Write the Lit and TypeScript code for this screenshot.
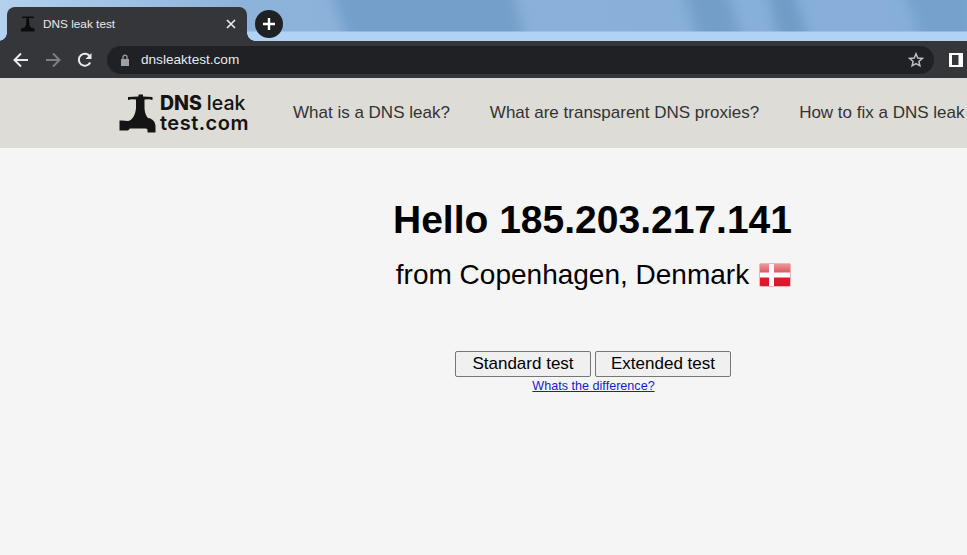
import { LitElement, html, css, svg } from "lit";
import { customElement } from "lit/decorators.js";

const tap = svg`<path fill="#141414" d="M128 95 L138.500 94.500 V92.500 H143 V94.500 L152.500 95 V98 L149 97.300 L144.500 97.500 V106 C144.500 110 146 114 148 116 C151 116.500 155 118 155.500 124 V130.500 H147.500 V127.500 L146 126.500 H130 L128 128.500 H119.500 V118.500 H122 L128 119 C133 118 135.500 112 136 106 V97.500 L131.500 97.300 L128 98 Z"/>`;

@customElement("app-root")
export class AppRoot extends LitElement {
  static styles = css`
    :host { display: block; width: 967px; height: 555px; overflow: hidden; background: #f5f5f5; font-family: "Liberation Sans", Arial, sans-serif; color: #000; }
    .tabstrip { height: 41px; position: relative; display: flex; align-items: flex-end; padding-left: 7px; box-sizing: border-box; overflow: hidden; background: #8bb2da; }
    .sky { position: absolute; inset: 0; width: 100%; height: 100%; }
    .tab { width: 240px; height: 34px; background: #35363a; border-radius: 8px 8px 0 0; display: flex; align-items: center; box-sizing: border-box; padding: 0 10px 0 13px; color: #e8eaed; font-size: 11.8px; position: relative; z-index: 1; }
    .tab::before, .tab::after { content: ""; position: absolute; bottom: 0; width: 8px; height: 8px; }
    .tab::before { left: -8px; background: radial-gradient(circle at 0 0, transparent 7.500px, #35363a 8px); }
    .tab::after { right: -8px; background: radial-gradient(circle at 100% 0, transparent 7.500px, #35363a 8px); }
    .favicon { width: 16px; height: 16px; margin-right: 7px; flex: none; }
    .tab .title { flex: 1; }
    .close { width: 12px; height: 12px; }
    .newtab { position: absolute; left: 255px; top: 10px; width: 28px; height: 28px; border-radius: 50%; background: #202124; z-index: 1; display: flex; align-items: center; justify-content: center; }
    .toolbar { height: 37px; background: #35363a; display: flex; align-items: center; box-sizing: border-box; padding-left: 12px; }
    .nav { width: 18px; height: 18px; flex: none; }
    .nav + .nav { margin-left: 14px; }
    .omni { width: 827px; height: 28px; margin-left: 13px; border-radius: 14px; background: #202124; display: flex; align-items: center; box-sizing: border-box; padding: 0 10px 0 13px; color: #e8eaed; font-size: 13.6px; }
    .lock { width: 10px; height: 12px; margin-right: 11px; }
    .omni .url { flex: 1; }
    .star { width: 16px; height: 16px; }
    .side { width: 14px; height: 14px; margin-left: 15px; flex: none; }
    .site { height: 70px; background: #dddcd6; display: flex; align-items: center; padding-left: 118px; white-space: nowrap; overflow: hidden; }
    .logo { display: flex; align-items: center; width: 175px; flex: none; }
    .logo svg { width: 40px; height: 42px; flex: none; }
    .wordmark { font-family: Inter, "Liberation Sans", sans-serif; font-size: 19.5px; line-height: 20px; font-weight: 600; color: #141414; margin-left: 2px; }
    .wordmark b { font-weight: 800; }
    .wordmark span { font-weight: 500; }
    .wordmark i { font-style: normal; font-size: 20px; letter-spacing: .5px; }
    .links { display: flex; gap: 40px; font-size: 17px; color: #333; }
    main { display: flex; flex-direction: column; align-items: center; padding-left: 218px; }
    h1 { margin: 48px 0 0; font-size: 39px; line-height: 48px; font-weight: 700; }
    .from { margin-top: 11px; padding-left: 2px; font-size: 28px; line-height: 40px; display: flex; align-items: center; gap: 10px; }
    .flag { width: 32px; height: 24px; }
    .buttons { margin-top: 56px; display: flex; gap: 4px; }
    button { width: 136px; height: 26px; padding: 0 0 0 1px; background: #f0f0f0; border: 1px solid #767676; border-radius: 2px; font: 17px "Liberation Sans", Arial, sans-serif; color: #000; }
    a { margin-top: 1px; padding-left: 2px; font-size: 12.6px; line-height: 16px; color: #1a1acc; }
  `;

  render() {
    return html`
      <div class="tabstrip">
        <svg class="sky" viewBox="0 0 967 41" preserveAspectRatio="none">
          <defs>
            <filter id="b" filterUnits="userSpaceOnUse" x="0" y="-40" width="967" height="120"><feGaussianBlur stdDeviation="7"/></filter>
            <linearGradient id="l" x1="0" y1="0" x2="1" y2="0"><stop offset="0" stop-color="#b3d1ee"/><stop offset=".25" stop-color="#8db3da"/><stop offset="1" stop-color="#86aed9"/></linearGradient>
          </defs>
          <rect width="967" height="41" fill="url(#l)"/>
          <g filter="url(#b)">
            <path d="M328 -20H510L528 50H350Z" fill="#739fca"/>
            <path d="M680 -20H725L745 50H700Z" fill="#739ec8"/>
            <path d="M765 -20H790L812 50H780Z" fill="#6f9bc6"/>
            <path d="M900 -20H975V50H925Z" fill="#75a1cc"/>
          </g>
          <rect y="31.500" width="967" height="10" fill="#b1d2f4"/>
        </svg>
        <div class="tab">
          <svg class="favicon" viewBox="0 0 16 16"><path fill="#0c0c0c" d="M2 .5h12V2H9L9.500 9 11 11.500l3.500 1V15.500H1V12.500l3.500-1L6 9 6.500 2H2Z"/></svg>
          <span class="title">DNS leak test</span>
          <svg class="close" viewBox="0 0 12 12"><path d="M2 2l8 8M10 2l-8 8" stroke="#e8eaed" stroke-width="1.700"/></svg>
        </div>
        <div class="newtab"><svg width="14" height="14" viewBox="0 0 14 14"><path d="M7 1v12M1 7h12" stroke="#fff" stroke-width="2.400"/></svg></div>
      </div>
      <div class="toolbar">
        <svg class="nav" viewBox="0 0 18 18"><path d="M16 9H3M9 2.500L2.500 9 9 15.500" fill="none" stroke="#e8eaed" stroke-width="2"/></svg>
        <svg class="nav" viewBox="0 0 18 18"><path d="M2 9h13M9 2.500L15.500 9 9 15.500" fill="none" stroke="#7d7e80" stroke-width="2"/></svg>
        <svg class="nav" viewBox="0 0 18 18"><path d="M14.200 11.500A6 6 0 1 1 14 5.700" fill="none" stroke="#e8eaed" stroke-width="2"/><path d="M15.500 2v6h-6Z" fill="#e8eaed"/></svg>
        <div class="omni">
          <svg class="lock" viewBox="0 0 10 12"><path fill="#9aa0a6" d="M1 5h8v7H1Z"/><path d="M3 5V3.200a2 2 0 0 1 4 0V5" fill="none" stroke="#9aa0a6" stroke-width="1.300"/></svg>
          <span class="url">dnsleaktest.com</span>
          <svg class="star" viewBox="0 0 16 16"><path d="M8 1.800l1.800 4.200 4.500.4-3.400 3 1 4.400L8 11.500l-3.900 2.300 1-4.400-3.400-3 4.500-.4Z" fill="none" stroke="#bdc1c6" stroke-width="1.500"/></svg>
        </div>
        <svg class="side" viewBox="0 0 14 14"><path fill="#fff" d="M0 0h14v14H0Z"/><path fill="#35363a" d="M3 2h6.500v10H3Z"/></svg>
      </div>
      <header class="site">
        <div class="logo">
          <svg viewBox="118 90 40 42">${tap}</svg>
          <div class="wordmark"><b>DNS</b> <span>leak</span><br /><i>test.com</i></div>
        </div>
        <nav class="links">
          <span>What is a DNS leak?</span>
          <span>What are transparent DNS proxies?</span>
          <span>How to fix a DNS leak</span>
        </nav>
      </header>
      <main>
        <h1>Hello 185.203.217.141</h1>
        <div class="from">
          <span>from Copenhagen, Denmark</span>
          <svg class="flag" viewBox="0 0 32 24">
            <defs><linearGradient id="f" x1="0" y1="0" x2="0" y2="1"><stop offset="0" stop-color="#ef9a9c"/><stop offset=".42" stop-color="#d9565c"/><stop offset=".55" stop-color="#e21c2c"/><stop offset="1" stop-color="#d8182a"/></linearGradient></defs>
            <rect x=".5" y=".5" width="31" height="23" rx="1.500" fill="url(#f)" stroke="#ecb4b4"/>
            <path fill="#fff" d="M10 1h5v22h-5ZM1 9.500h30v5H1Z"/>
          </svg>
        </div>
        <div class="buttons">
          <button>Standard test</button>
          <button>Extended test</button>
        </div>
        <a href="#">Whats the difference?</a>
      </main>
    `;
  }
}
